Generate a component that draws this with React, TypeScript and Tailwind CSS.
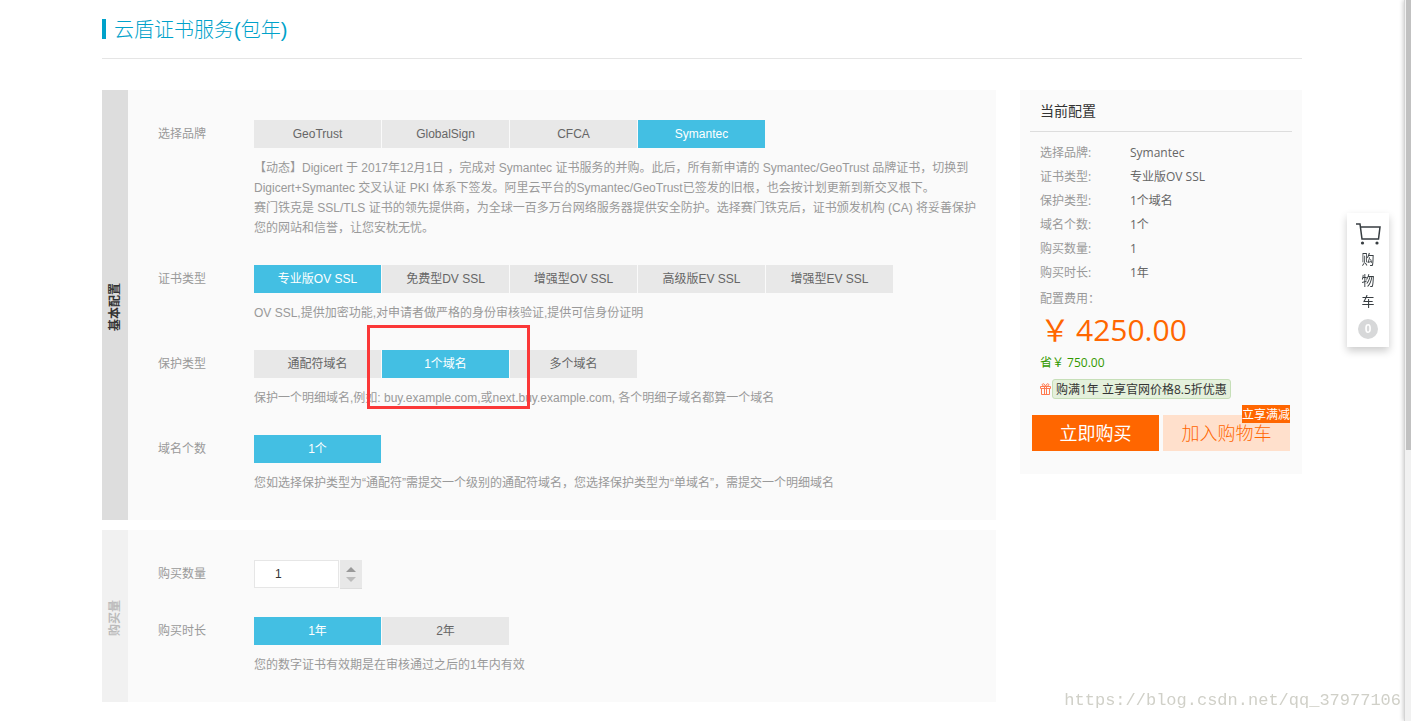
import { useState } from "react";
import type { ReactNode } from "react";

interface OptionRowProps {
  label: string;
  options: string[];
  defaultValue: string;
  children?: ReactNode;
  marked?: boolean;
}

const summary = [
  { label: "选择品牌:", value: "Symantec" },
  { label: "证书类型:", value: "专业版OV SSL" },
  { label: "保护类型:", value: "1个域名" },
  { label: "域名个数:", value: "1个" },
  { label: "购买数量:", value: "1" },
  { label: "购买时长:", value: "1年" },
];

function OptionRow({ label, options, defaultValue, children, marked }: OptionRowProps) {
  const [value, setValue] = useState(defaultValue);

  return (
    <div className="flex pb-[27px]">
      <div className="w-24 shrink-0 leading-7 text-[#999]">{label}</div>
      <div className="relative min-w-0 flex-1">
        <div className="flex gap-px" role="group" aria-label={label}>
          {options.map((option) => (
            <button
              key={option}
              type="button"
              aria-pressed={option === value}
              onClick={() => setValue(option)}
              className={`h-7 w-[127px] leading-7 ${
                option === value ? "bg-[#43bfe3] text-white" : "bg-[#e8e8e8] text-[#666]"
              }`}
            >
              {option}
            </button>
          ))}
        </div>
        <p className="mt-2.5 leading-5 text-[#999]">{children}</p>
        {marked && (
          <div className="pointer-events-none absolute -top-[25px] left-[113px] h-[84px] w-[163px] border-3 border-[#fb3838]" />
        )}
      </div>
    </div>
  );
}

function Section({ title, active, children }: { title: string; active?: boolean; children: ReactNode }) {
  return (
    <section className="flex bg-[#fafafa]">
      <h2
        className={`flex w-[26px] shrink-0 items-center justify-center pt-1 font-bold ${
          active ? "bg-[#ddd] text-[#333]" : "bg-[#f1f1f1] text-[#bbb]"
        }`}
      >
        <span className="rotate-180 leading-[18px] [text-orientation:sideways] [writing-mode:vertical-rl]">{title}</span>
      </h2>
      <div className="min-w-0 flex-1 pt-[30px] pr-4 pl-[30px]">{children}</div>
    </section>
  );
}

function QuantityRow() {
  const [quantity, setQuantity] = useState(1);

  return (
    <div className="flex pb-[27px]">
      <label htmlFor="quantity" className="w-24 shrink-0 leading-7 text-[#999]">
        购买数量
      </label>
      <div className="flex h-[30px] items-start gap-px">
        <input
          id="quantity"
          type="text"
          value={quantity}
          onChange={(e) => setQuantity(Number(e.target.value) || 1)}
          className="h-7 w-[85px] border border-[#e6e6e6] bg-white pl-5 text-[#333] outline-none"
        />
        <div className="flex h-[29px] w-[22px] flex-col items-center justify-center gap-[5px] border-b border-[#ddd] bg-[#e8e8e8]">
          <button type="button" aria-label="增加" onClick={() => setQuantity(quantity + 1)}>
            <svg className="block" width="10" height="5" viewBox="0 0 10 5">
              <path d="M5 0 10 5H0z" fill="#999" />
            </svg>
          </button>
          <button type="button" aria-label="减少" onClick={() => setQuantity(Math.max(1, quantity - 1))}>
            <svg className="block" width="10" height="5" viewBox="0 0 10 5">
              <path d="M0 0h10L5 5z" fill="#bbb" />
            </svg>
          </button>
        </div>
      </div>
    </div>
  );
}

function OrderSummary() {
  return (
    <aside className="w-[282px] shrink-0 bg-[#fafafa] pb-[23px] font-['Open_Sans','Noto_Sans_CJK_SC',sans-serif]">
      <h2 className="mx-2.5 h-[42px] border-b border-[#ddd] pl-2.5 text-sm leading-[42px] text-[#333]">当前配置</h2>
      <dl className="px-5 pt-[9px]">
        {summary.map((item) => (
          <div key={item.label} className="flex leading-6">
            <dt className="w-[90px] text-[#999]">{item.label}</dt>
            <dd className="text-[#666]">{item.value}</dd>
          </div>
        ))}
      </dl>
      <div className="px-5 pt-1">
        <p className="leading-5 text-[#999]">配置费用：</p>
        <p className="flex gap-1.5 text-[30px] leading-[42px] text-[#f60]">
          <span>￥</span>
          <span>4250.00</span>
        </p>
        <p className="leading-6 text-[#390]">省￥ 750.00</p>
        <div className="mt-1 flex items-center">
          <svg className="mr-px" width="11" height="12" viewBox="0 0 11 12" fill="none" stroke="#ff7a50">
            <path d="M.5 3.5h10v2H.5zM1.5 5.5v6h8v-6M4.5 3.5v8M6.5 3.5v8M5.5 3.5C3 3.5 1.5 2 2.5 1S5 1.5 5.5 3.5C6 1.5 7.500 0 8.500 1S8 3.5 5.5 3.5" />
          </svg>
          <span className="h-5 rounded-[3px] border border-[#c6dfb8] bg-[#e4f0dc] px-[3px] leading-5 whitespace-nowrap text-[#333]">
            购满1年 立享官网价格8.5折优惠
          </span>
        </div>
      </div>
      <div className="mt-4 flex gap-1 px-3 text-lg">
        <button type="button" className="h-9 flex-1 bg-[#f60] text-white">
          立即购买
        </button>
        <button type="button" className="relative h-9 flex-1 bg-[#ffe0cc] font-light text-[#f60]">
          加入购物车
          <span className="absolute -top-2.5 right-0 h-[18px] bg-[#f60] text-xs leading-5 font-normal whitespace-nowrap text-white">
            立享满减
          </span>
        </button>
      </div>
    </aside>
  );
}

function CartTab() {
  return (
    <a
      href="#cart"
      className="fixed top-[213px] right-[22px] flex w-[42px] flex-col items-center bg-white pt-2.5 pb-2 text-[13px] leading-[21px] text-[#373d41] shadow-[0_4px_8px_rgba(0,0,0,0.2)]"
    >
      <svg width="25" height="22" viewBox="0 0 25 22" fill="none" stroke="#373d41" strokeWidth="1.5">
        <path d="M0 1h4l2 15h16.500L24 4H4.500" />
        <circle cx="6.500" cy="20" r="1.600" fill="#373d41" stroke="none" />
        <circle cx="21" cy="20" r="1.600" fill="#373d41" stroke="none" />
      </svg>
      <span className="mt-1 w-[13px]">购物车</span>
      <span className="mt-[7px] h-5 w-5 rounded-full bg-[#d7d8d9] text-center text-xs leading-5 font-bold text-white">0</span>
    </a>
  );
}

export default function App() {
  return (
    <div className="flex min-h-screen bg-white font-['Liberation_Sans','Noto_Sans_CJK_SC',sans-serif] text-xs">
      <main className="min-w-0 flex-1">
        <div className="mx-auto max-w-[1200px]">
          <header className="border-b border-[#e5e5e5] py-[19px]">
            <h1 className="h-5 border-l-4 border-[#00a2ca] pl-2 text-xl leading-[22px] font-light text-[#00a2ca]">
              云盾证书服务(包年)
            </h1>
          </header>

          <div className="mt-[31px] flex items-start gap-6">
            <div className="flex min-w-0 flex-1 flex-col gap-2.5">
              <Section title="基本配置" active>
                <OptionRow
                  label="选择品牌"
                  options={["GeoTrust", "GlobalSign", "CFCA", "Symantec"]}
                  defaultValue="Symantec"
                >
                  【动态】Digicert 于 2017年12月1日 ，完成对 Symantec 证书服务的并购。此后，所有新申请的 Symantec/GeoTrust
                  品牌证书，切换到 Digicert+Symantec 交叉认证 PKI
                  体系下签发。阿里云平台的Symantec/GeoTrust已签发的旧根，也会按计划更新到新交叉根下。
                  <br />
                  赛门铁克是 SSL/TLS 证书的领先提供商，为全球一百多万台网络服务器提供安全防护。选择赛门铁克后，证书颁发机构
                  (CA) 将妥善保护您的网站和信誉，让您安枕无忧。
                </OptionRow>
                <OptionRow
                  label="证书类型"
                  options={["专业版OV SSL", "免费型DV SSL", "增强型OV SSL", "高级版EV SSL", "增强型EV SSL"]}
                  defaultValue="专业版OV SSL"
                >
                  OV SSL,提供加密功能,对申请者做严格的身份审核验证,提供可信身份证明
                </OptionRow>
                <OptionRow label="保护类型" options={["通配符域名", "1个域名", "多个域名"]} defaultValue="1个域名" marked>
                  保护一个明细域名,例如: buy.example.com,或next.buy.example.com, 各个明细子域名都算一个域名
                </OptionRow>
                <OptionRow label="域名个数" options={["1个"]} defaultValue="1个">
                  您如选择保护类型为“通配符”需提交一个级别的通配符域名，您选择保护类型为“单域名”，需提交一个明细域名
                </OptionRow>
              </Section>

              <Section title="购买量">
                <QuantityRow />
                <OptionRow label="购买时长" options={["1年", "2年"]} defaultValue="1年">
                  您的数字证书有效期是在审核通过之后的1年内有效
                </OptionRow>
              </Section>
            </div>

            <OrderSummary />
          </div>
        </div>
      </main>

      {/* Scroll track */}
      <div className="w-[7px] shrink-0 border-l border-[#d5d5d5] bg-[#f1f1f1] pl-px shadow-[-1px_0_4px_rgba(0,0,0,0.2)]">
        <div className="h-[450px] bg-[#c1c1c1]" />
      </div>

      <CartTab />
      <p className="pointer-events-none fixed right-2.5 bottom-2 font-['Liberation_Mono',monospace] text-[17px] leading-6 text-[#d0d0c8]">
        https://blog.csdn.net/qq_37977106
      </p>
    </div>
  );
}
